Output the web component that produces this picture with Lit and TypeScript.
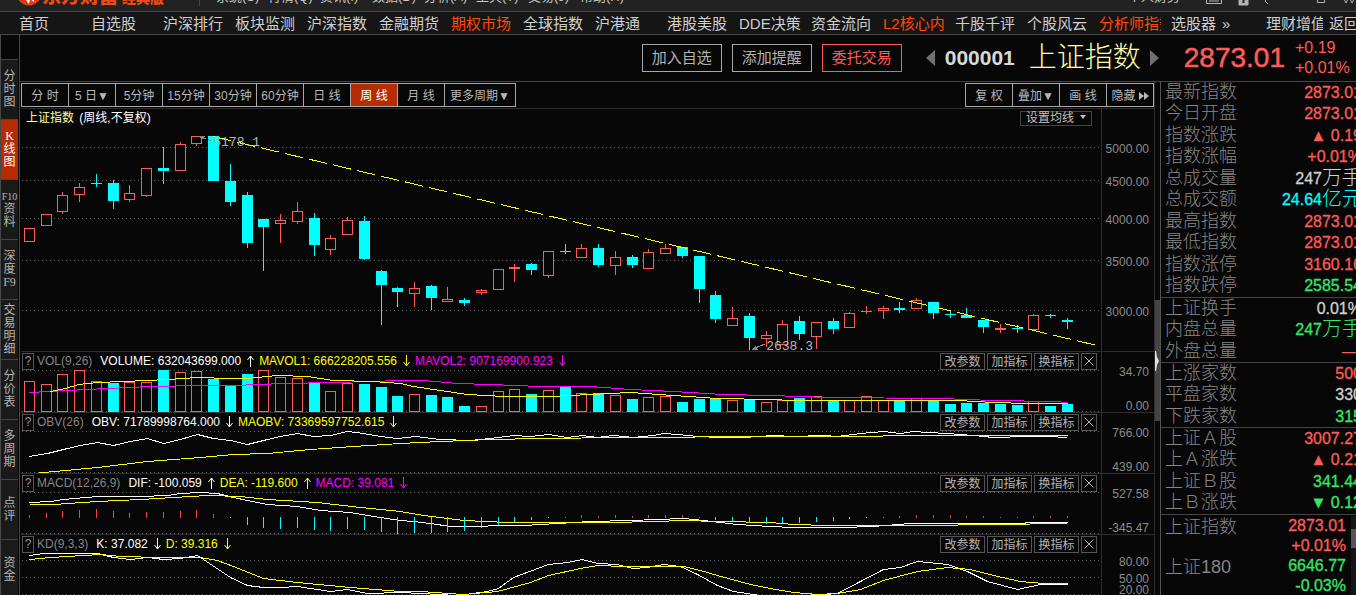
import { LitElement, html, svg, css } from "lit";
import { customElement, property } from "lit/decorators.js";
import { classMap } from "lit/directives/class-map.js";

type Tone = "up" | "down" | "plain" | "amount";
// direction, body top, body bottom, wick top, wick bottom
type Candle = [string, number, number, number, number];

const FIRST_X = 24;
const STEP = 16.74;
const slotX = (i: number) => Math.round(FIRST_X + STEP * i);

const CANDLES: Candle[] = [
  ["r", 228, 242, 228, 242], ["r", 214, 226, 214, 226], ["r", 195, 212, 192, 214],
  ["r", 187, 195, 183, 202], ["c", 183, 184, 174, 187], ["c", 183, 201, 180, 209],
  ["r", 193, 200, 185, 202], ["r", 168, 196, 168, 197], ["c", 168, 171, 147, 184],
  ["r", 144, 171, 142, 171], ["r", 136, 144, 136, 146], ["c", 136, 181, 136, 181],
  ["c", 181, 202, 164, 206], ["c", 195, 243, 192, 248], ["c", 219, 227, 219, 271],
  ["r", 220, 224, 214, 243], ["r", 211, 222, 202, 224], ["c", 218, 245, 213, 256],
  ["r", 238, 250, 235, 255], ["r", 220, 235, 217, 235], ["c", 221, 259, 216, 260],
  ["c", 271, 285, 270, 325], ["c", 288, 292, 287, 307], ["r", 288, 294, 282, 307],
  ["c", 286, 298, 285, 310], ["r", 299, 302, 287, 302], ["c", 300, 303, 298, 306],
  ["r", 290, 293, 289, 295], ["r", 269, 290, 269, 290], ["r", 267, 269, 264, 282],
  ["c", 264, 270, 263, 275], ["r", 251, 276, 251, 278], ["c", 251, 252, 244, 254],
  ["r", 248, 258, 244, 258], ["c", 248, 265, 244, 267], ["r", 257, 266, 251, 275],
  ["c", 257, 265, 255, 268], ["r", 252, 269, 249, 269], ["r", 248, 254, 244, 254],
  ["c", 247, 256, 247, 258], ["c", 256, 289, 256, 303], ["c", 295, 319, 291, 323],
  ["r", 318, 326, 307, 326], ["c", 316, 338, 313, 350], ["r", 335, 339, 331, 347],
  ["r", 324, 345, 320, 345], ["c", 321, 334, 316, 340], ["r", 322, 337, 322, 349],
  ["c", 321, 329, 318, 334], ["r", 313, 328, 312, 328], ["r", 311, 312, 306, 314],
  ["r", 308, 311, 306, 319], ["c", 308, 310, 302, 313], ["r", 300, 309, 298, 309],
  ["c", 302, 313, 302, 319], ["c", 314, 315, 311, 318], ["c", 315, 318, 308, 318],
  ["c", 320, 327, 320, 333], ["r", 328, 330, 324, 333], ["c", 328, 329, 325, 333],
  ["r", 315, 330, 314, 330], ["c", 315, 316, 314, 318], ["c", 320, 322, 318, 329],
];

const VOLUMES =
  "r381 r384 r374 r370 r381 c383 r382 r382 c370 r372 r371 c379 c386 c374 r370 r377 r378 c383 r391 r383 c384 c387 c396 r394 c395 c397 c406 r406 r391 r389 c394 r390 c387 r393 c393 r395 c399 r397 r396 c402 c399 c398 r400 c400 r402 r400 c398 r396 c401 r400 r396 r400 c401 r398 c400 c404 c403 c403 c404 c405 r401 c406 c404"
    .split(" ")
    .map((v) => ({ dir: v[0], top: Number(v.slice(1)) }));

// positive: top of a rising bar; negative: bottom of a falling bar
const MACD_BARS = [
  515, 513, 511, 510, 509, 511, 513, 512, 512, 511, 510, 514, -518, -525, -528, -529, -528, -530, -531, -529, -530,
  -532, -534, -533, -533, -532, -531, -528, -525, -522, -520, -518, 517, 515, 516, 515, 516, 515, 515, 515, 517, -520,
  -521, -523, -524, -523, -523, -522, -521, -519, -518, 517, 516, 515, 515, 515, 516, 516, 517, 517, 516, 516, 516,
];

const LINES = {
  vol1: "50,391 65,388 78,384 97,382 147,380 167,379 197,377 230,378 247,378 277,375 307,376 333,380 373,381 400,383 413,386 440,390 467,394 503,396 550,396 590,394 630,392 673,395 717,398 770,399 793,400 823,400 957,400 993,402 1027,403 1067,403",
  vol2: "29,392 67,390 107,388 150,386 200,385 233,385 283,383 333,382 370,381 400,380 423,380 457,383 490,384 540,386 590,386 630,389 673,391 723,394 770,395 827,397 940,398 993,400 1053,401 1067,402",
  obv: "29,456 47,453 63,449 80,445 97,442 113,445 130,441 147,438 163,443 180,439 197,434 213,438 230,440 247,444 263,440 280,436 297,433 313,436 330,435 347,431 363,433 380,436 397,438 415,436 440,439 470,440 490,438 513,435 530,436 548,434 567,437 582,435 597,437 613,435 633,437 653,435 663,433 677,434 697,436 720,437 743,437 773,435 793,436 823,435 837,436 860,433 883,431 900,433 913,431 927,432 947,433 973,435 993,437 1027,436 1047,436 1067,437",
  maobv: "33,473 97,467 147,461 200,457 233,454 267,453 310,449 353,446 400,443 440,441 490,439 540,438 623,437 770,436 873,436 893,435 1067,435",
  dif: "29,502 50,501 63,499 97,496 140,496 167,495 180,493 200,492 217,493 233,497 247,500 267,504 297,506 320,510 350,512 373,516 400,520 413,521 430,523 450,526 483,526 493,525 523,525 557,523 590,521 630,520 683,518 703,520 737,524 770,526 793,527 840,527 873,526 910,523 1023,523 1027,522 1067,522",
  dea: "29,504 53,504 97,501 140,499 173,497 207,495 240,496 267,499 317,502 360,507 400,511 423,515 463,520 507,522 573,522 607,522 657,521 680,520 720,521 770,522 793,524 827,525 923,525 993,524 1067,523",
  k: "29,555 43,553 97,553 113,557 130,559 147,557 163,559 180,558 197,555 230,577 247,585 263,587 280,587 297,586 330,591 347,589 367,593 400,592 420,593 457,595 487,591 498,588 513,577 548,564 567,562 582,559 597,563 617,564 632,568 647,567 663,564 680,566 697,574 717,585 733,591 760,595 810,595 837,593 860,581 883,569 900,567 917,561 947,564 967,571 987,581 1017,589 1040,584 1067,584",
  d: "29,559 50,557 100,554 120,556 160,557 200,557 217,560 233,566 263,578 297,582 350,587 400,591 420,591 463,594 497,591 530,582 548,575 580,568 597,565 623,566 653,566 683,566 700,570 717,575 750,584 770,588 793,592 817,594 837,593 860,589 883,580 917,571 947,567 970,569 993,575 1020,581 1043,583 1067,583",
};

const PRICE_AXIS = [
  { y: 147, label: "5000.00" },
  { y: 180, label: "4500.00" },
  { y: 218, label: "4000.00" },
  { y: 260, label: "3500.00" },
  { y: 310, label: "3000.00" },
];

const UP = "#ff5b57";
const CYAN = "#00ffff";

const grid = (ys: number[]) =>
  ys.map((y) => svg`<line x1="22" x2="1101" y1=${y + 0.5} y2=${y + 0.5} stroke="#606060" stroke-dasharray="1 3"/>`);
const curve = (points: string, color: string) =>
  svg`<polyline points=${points} fill="none" stroke=${color} vector-effect="non-scaling-stroke" transform="translate(0.5 0.5)"/>`;
const box = (dir: string, x: number, top: number, bottom: number) =>
  dir === "c" || bottom - top < 3
    ? svg`<rect x=${x} y=${top} width="11" height=${bottom - top} fill=${dir === "c" ? CYAN : UP}/>`
    : svg`<rect x=${x + 0.5} y=${top + 0.5} width="10" height=${bottom - top - 1} fill="#070707" stroke=${UP}/>`;

const arrow = (dir: string, color: string) => html`<svg class="trend" viewBox="0 0 7 12" aria-hidden="true">
  ${dir === "up"
    ? svg`<path d="M3.5 12V1M.5 5l3-4 3 4" fill="none" stroke=${color}/>`
    : svg`<path d="M3.5 0v11M.5 7l3 4 3-4" fill="none" stroke=${color}/>`}
</svg>`;

@customElement("indicator-panel")
class IndicatorPanel extends LitElement {
  @property() name = "";
  @property({ attribute: false }) readings: { text: string; dir: string; color: string }[] = [];
  @property({ attribute: false }) plot: unknown = null;
  @property({ attribute: false }) axis: { y: number; label: string }[] = [];
  @property({ type: Number }) top = 0;

  static styles = css`
    :host { display: grid; grid-template-columns: 1fr 53px; border-top: 1px solid #2e2e2e; height: 60px; }
    .body { min-width: 0; }
    .head { display: flex; align-items: center; height: 18px; gap: 8px; padding: 0 4px 0 1px; white-space: nowrap; line-height: 16px; }
    button { font: inherit; color: #b4b4b4; background: #070707; border: 1px solid #555; padding: 0; height: 17px; line-height: 16px; cursor: pointer; }
    .help { width: 12px; margin-right: -5px; color: #9a9a9a; line-height: 15px; }
    .name { color: #868686; }
    .reading { display: flex; align-items: center; gap: 6px; }
    .reading + .reading { margin-left: -3px; }
    .white { color: #fff; }
    .yellow { color: #ff0; }
    .magenta { color: #f0f; }
    .trend { width: 7px; height: 12px; display: block; }
    .actions { display: flex; gap: 2px; margin-left: auto; }
    .actions button { width: 45px; }
    .actions .close { width: 16px; display: grid; place-items: center; }
    .close svg { width: 10px; height: 10px; }
    .plot { display: block; width: 100%; height: 42px; }
    .axis { display: block; width: 52px; height: 60px; border-left: 1px solid #2e2e2e; font-size: 12px; }
  `;

  render() {
    const hex: Record<string, string> = { white: "#fff", yellow: "#ff0", magenta: "#f0f" };
    return html`
      <div class="body">
        <div class="head">
          <button class="help" aria-label="${this.name} 说明">?</button>
          <span class="name">${this.name}</span>
          ${this.readings.map(
            (r) => html`<span class="reading ${r.color}">${r.text}${arrow(r.dir, hex[r.color])}</span>`
          )}
          <span class="actions">
            <button>改参数</button><button>加指标</button><button>换指标</button>
            <button class="close" aria-label="关闭">
              <svg viewBox="0 0 10 10"><path d="M.5.5l9 9M9.5.5l-9 9" stroke="#b4b4b4" fill="none"/></svg>
            </button>
          </span>
        </div>
        <svg class="plot" viewBox="21 ${this.top + 18} 1080 42" preserveAspectRatio="none" shape-rendering="crispEdges">
          ${this.plot}
        </svg>
      </div>
      <svg class="axis" viewBox="0 ${this.top} 52 60">
        ${this.axis.map((a) => svg`<text x="47" y=${a.y} text-anchor="end" fill="#8c8c8c">${a.label}</text>`)}
      </svg>
    `;
  }
}

const QUOTES: [string, string, string, Tone][][] = [
  [
    ["最新指数", "2873.01", "", "up"],
    ["今日开盘", "2873.01", "", "up"],
    ["指数涨跌", "▲ 0.19", "", "up"],
    ["指数涨幅", "+0.01%", "", "up"],
    ["总成交量", "247", "万手", "plain"],
    ["总成交额", "24.64", "亿元", "amount"],
    ["最高指数", "2873.01", "", "up"],
    ["最低指数", "2873.01", "", "up"],
    ["指数涨停", "3160.16", "", "up"],
    ["指数跌停", "2585.54", "", "down"],
  ],
  [
    ["上证换手", "0.01%", "", "plain"],
    ["内盘总量", "247", "万手", "down"],
    ["外盘总量", "", "—", "up"],
  ],
  [
    ["上涨家数", "500", "", "up"],
    ["平盘家数", "330", "", "plain"],
    ["下跌家数", "315", "", "down"],
  ],
  [
    ["上证Ａ股", "3007.27", "", "up"],
    ["上Ａ涨跌", "▲ 0.21", "", "up"],
    ["上证Ｂ股", "341.44", "", "down"],
    ["上Ｂ涨跌", "▼ 0.12", "", "down"],
  ],
];

const MENU: [string, boolean][] = [
  ["首页", false], ["自选股", false], ["沪深排行", false], ["板块监测", false], ["沪深指数", false],
  ["金融期货", false], ["期权市场", true], ["全球指数", false], ["沪港通", false], ["港股美股", false],
  ["DDE决策", false], ["资金流向", false], ["L2核心内参", true], ["千股千评", false], ["个股风云", false],
  ["分析师指数", true],
];

const SIDE = [
  ["分", "时", "图"], ["K", "线", "图"], ["F10", "资", "料"], ["深", "度", "F9"], ["交", "易", "明", "细"],
  ["分", "价", "表"], ["多", "周", "期"], ["点", "评"], ["资", "金"],
];

const PERIODS = ["分 时", "5 日▼", "5分钟", "15分钟", "30分钟", "60分钟", "日 线", "周 线", "月 线", "更多周期▼"];

@customElement("app-root")
class AppRoot extends LitElement {
  static styles = css`
    :host {
      display: flex; flex-direction: column; height: 100vh; overflow: hidden; background: #070707; color: #c8c8c8;
      font: 12px/16px "Liberation Sans", "Noto Sans CJK SC", sans-serif;
    }
    button { font: inherit; padding: 0; cursor: pointer; }
    a { color: inherit; text-decoration: none; }

    .titlebar { flex: none; height: 11px; overflow: hidden; display: flex; align-items: flex-end; background: #222; border-bottom: 1px solid #484848; white-space: nowrap; }
    .brand { flex: none; width: 200px; height: 26px; padding-left: 16px; box-sizing: border-box; display: flex; align-items: flex-start; color: #f04a12; font-weight: 900; border-right: 1px solid #444; margin-bottom: 5px; }
    .logo { width: 26px; height: 26px; }
    .brand b { font-size: 19px; line-height: 34px; }
    .brand small { font-size: 14px; line-height: 36px; margin-left: 4px; }
    .system { display: flex; padding-left: 16px; margin-bottom: 5px; }
    .system a { width: 52px; font-size: 13px; line-height: 18px; }
    .tray { margin: 0 0 5px auto; display: flex; align-items: flex-end; font-size: 13px; line-height: 18px; }
    .tray svg { width: 156px; height: 16px; margin-left: 20px; }

    .menu { flex: none; display: flex; height: 22px; padding-left: 19px; background: #151515; border-bottom: 1px solid #484848; font-size: 15px; line-height: 24px; white-space: nowrap; color: #cfcfcf; overflow: hidden; }
    .menu a { flex: none; width: 62px; margin-right: 10px; overflow: hidden; }
    .menu a.hot { color: #ff4a0a; }
    .menu a.short { width: 51px; margin-right: 0; }
    .menu a.more { width: 44px; margin-right: 0; }
    .menu a.wealth { width: 57px; margin-right: 6px; }

    .shell { flex: 1; min-height: 0; display: flex; }
    .side { flex: none; width: 18px; border-left: 1px solid #484848; border-right: 1px solid #484848; padding-top: 24px; }
    .side a { height: 59px; border-top: 1px solid #444; display: flex; flex-direction: column; align-items: center; justify-content: center; line-height: 13px; font-size: 12px; background: #1a1a1a; color: #b4b4b4; font-family: "Liberation Serif", "Noto Sans CJK SC", serif; margin-right: 1px; }
    .side a.on { background: #b62c00; color: #fff; }
    .side .wide { font-size: 10px; }

    .work { flex: 1; min-width: 0; display: flex; flex-direction: column; }
    .header { flex: none; height: 46px; display: flex; align-items: center; justify-content: flex-end; border-bottom: 1px solid #444; }
    .act { width: 80px; height: 28px; margin-right: 10px; background: none; border: 1px solid #a8a8a8; color: #b4b4b4; font-size: 15px; line-height: 24px; }
    .act.trade { border-color: #ff5b57; color: #ff5b57; }
    .step { width: 9px; height: 16px; border: 0; background: none; display: grid; }
    .step svg { width: 9px; height: 16px; }
    .step.prev { margin-left: 14px; }
    .code { font-size: 21px; font-weight: bold; color: #d8d8d8; margin-left: 10px; }
    .stock { width: 112px; font-size: 28px; font-weight: 300; line-height: 40px; color: #ffffa8; margin: 0 9px 0 14px; }
    .last { font-size: 28px; color: #ff5b57; margin-left: 25px; -webkit-text-stroke: 0.5px #ff5b57; }
    .delta { width: 61px; margin-left: 10px; font-size: 16px; line-height: 20px; color: #ff5b57; }
    .delta span { display: block; }

    .content { flex: 1; min-height: 0; display: flex; }
    .charts { flex: 1; min-width: 0; padding-left: 1px; }
    .toolbar { display: flex; justify-content: space-between; height: 24px; padding: 1px 0; border-bottom: 1px solid #2e2e2e; }
    .tabs { display: flex; border: 1px solid #a8a8a8; }
    .tabs button { width: 47px; border: 0; border-right: 1px solid #a8a8a8; background: none; color: #b8b8b8; white-space: nowrap; padding-top: 1px; }
    .tabs button:last-child { border-right: 0; width: 46px; }
    .tabs.periods button:last-child { width: 70px; }
    .tabs button.on { background: #b62c00; color: #fff; }
    .tabs svg { width: 10px; height: 8px; margin-left: 3px; }

    .price { display: grid; grid-template-columns: 1fr 53px; }
    .caption { display: flex; justify-content: space-between; align-items: center; height: 18px; line-height: 18px; padding: 0 9px 0 5px; color: #fff; }
    .caption em { font-style: normal; color: #ffffa8; margin-right: 2px; }
    .avg { width: 72px; height: 15px; border: 1px solid #444; background: none; color: #c0c0c0; line-height: 13px; white-space: nowrap; }
    .avg svg { width: 6px; height: 4px; margin: 0 0 3px 6px; }
    .stage { position: relative; overflow: hidden; }
    .stage svg { display: block; width: 100%; height: 224px; }
    .mark { position: absolute; font: 13px/14px "Liberation Mono", monospace; color: #b8b8b8; }
    .high { left: 17.8%; top: 9px; }
    .low { left: 69%; top: 213px; }
    .scale { display: block; width: 52px; height: 242px; border-left: 1px solid #2e2e2e; }

    .divider { flex: none; width: 5px; border-left: 1px solid #2e2e2e; padding-top: 218px; }
    .divider button { display: grid; place-items: center start; width: 5px; height: 121px; background: #444; border: 0; }
    .divider svg { width: 4px; height: 20px; }

    .quotes { flex: none; width: 195px; border-left: 1px solid #555; overflow: hidden; }
    .group { border-bottom: 1px solid #444; width: 201px; margin: 0; }
    .row { display: flex; justify-content: space-between; height: 21px; line-height: 21px; padding-left: 4px; white-space: nowrap; }
    .row:nth-child(even) { height: 22px; }
    dt { font-size: 18px; font-weight: 300; color: #868686; }
    dd { margin: 0; font-size: 16px; -webkit-text-stroke: 0.3px currentColor; display: flex; }
    dd i { font-style: normal; font-size: 20px; font-weight: 300; -webkit-text-stroke: 0; }
    .up { color: #ff5b57; }
    .down { color: #33e866; }
    .plain { color: #d0d0d0; }
    .amount { color: #00ffff; }
    .watch { display: flex; padding-top: 1px; }
    .watch dl { flex: 1; margin: 0; padding: 0 5px 0 4px; }
    .watch .item { display: flex; justify-content: space-between; line-height: 20px; }
    .watch dt { line-height: 22px; }
    .watch dd { flex-direction: column; align-items: flex-end; }
    .scroll { width: 5px; height: 82px; background: #151515; padding-top: 13px; }
    .thumb { height: 19px; background: #555; }
  `;

  private renderPrice() {
    return svg`
      ${grid(PRICE_AXIS.map((a) => a.y))}
      ${CANDLES.map(([dir, top, bottom, high, low], i) => {
        const x = slotX(i);
        return svg`<rect x=${x + 5} y=${high} width="1" height=${low - high} fill=${dir === "c" ? CYAN : UP}/>${box(dir, x, top, bottom)}`;
      })}
      <line x1="213" y1="136.5" x2="1095" y2="345" stroke="#ff0" stroke-dasharray="18.5 6.17"/>
      <path d="M198 136h7l-3 4z" fill="#888"/><path d="M203 138l9 3" stroke="#888" stroke-dasharray="3 2"/>
      <path d="M751 350l5-4 2 4z" fill="#888"/><path d="M755 348l10-4" stroke="#888"/>`;
  }

  private renderVolume() {
    return svg`${grid([370, 411])}
      ${VOLUMES.map((v, i) => box(v.dir, slotX(i), v.top, 412))}
      ${curve(LINES.vol2, "#f0f")}${curve(LINES.vol1, "#ff0")}`;
  }

  private renderMacd() {
    return svg`${grid([492, 533])}
      ${curve(LINES.dif, "#fff")}${curve(LINES.dea, "#ff0")}
      ${MACD_BARS.map((v, i) =>
        v > 0
          ? svg`<rect x=${slotX(i) + 5} y=${v} width="1" height=${518 - v} fill="#ff3c3c"/>`
          : svg`<rect x=${slotX(i) + 5} y="517" width="1" height=${-v - 517} fill=${CYAN}/>`
      )}`;
  }

  render() {
    return html`
      <header class="titlebar">
        <div class="brand">
          <svg class="logo" viewBox="0 0 26 26"><circle cx="13" cy="13" r="12.5" fill="#e8380d"/><path d="M8 8l2 12 3 4 1-5 4 3 1-14z" fill="#fff"/><path d="M12 12l2 6 3-7z" fill="#e8380d"/></svg>
          <b>东方财富</b><small>经典版</small>
        </div>
        <nav class="system">
          ${["系统(S)", "行情(Q)", "资讯(I)", "数据(D)", "分析(A)", "工具(T)", "交易(J)", "帮助(H)"].map((t) => html`<a href="#">${t}</a>`)}
        </nav>
        <div class="tray">
          <span>个人财务</span>
          <svg viewBox="0 0 156 16" fill="none" stroke="#b4b4b4"><path d="M6.5 6v7.500h15V6M9 11h10" /><path d="M39 6v9h9V6z" fill="#b4b4b4"/><path d="M43.5 10v3" stroke="#222" stroke-width="2"/><path d="M68 8l-3 3 3 3M117.5 6v6.500h7V6M143 7l3 6 3-6 3 6 3-6"/></svg>
        </div>
      </header>

      <nav class="menu">
        ${MENU.map(([t, hot]) => html`<a href="#" class=${classMap({ hot })}>${t}</a>`)}
        <a href="#" class="short">选股器</a><a href="#" class="more">»</a><a href="#" class="wealth">理财增值</a><a href="#">返回</a>
      </nav>

      <div class="shell">
        <nav class="side">
          ${SIDE.map(
            (cs, i) =>
              html`<a href="#" class=${classMap({ on: i === 1 })}>${cs.map((c) => html`<span class=${classMap({ wide: c.length > 2 })}>${c}</span>`)}</a>`
          )}
        </nav>
        <div class="work">
          <div class="header">
            <button class="act">加入自选</button><button class="act">添加提醒</button><button class="act trade">委托交易</button>
            <button class="step prev" aria-label="上一个"><svg viewBox="0 0 9 16"><path d="M9 0v16L0 8z" fill="#707070"/></svg></button>
            <span class="code">000001</span><span class="stock">上证指数</span>
            <button class="step" aria-label="下一个"><svg viewBox="0 0 9 16"><path d="M0 0v16l9-8z" fill="#707070"/></svg></button>
            <span class="last">2873.01</span>
            <span class="delta"><span>+0.19</span><span>+0.01%</span></span>
          </div>
          <div class="content">
            <main class="charts">
              <div class="toolbar">
                <div class="tabs periods">${PERIODS.map((p, i) => html`<button class=${classMap({ on: i === 7 })}>${p}</button>`)}</div>
                <div class="tabs">
                  <button>复 权</button><button>叠加▼</button><button>画 线</button>
                  <button>隐藏<svg viewBox="0 0 10 8"><path d="M0 0l5 4-5 4zM5 0l5 4-5 4z" fill="#b8b8b8"/></svg></button>
                </div>
              </div>
              <section class="price">
                <div>
                  <div class="caption">
                    <span><em>上证指数</em> (周线,不复权)</span>
                    <button class="avg">设置均线<svg viewBox="0 0 6 4"><path d="M0 0h6L3 4z" fill="#c0c0c0"/></svg></button>
                  </div>
                  <div class="stage">
                    <svg viewBox="21 127 1080 224" preserveAspectRatio="none" shape-rendering="crispEdges">${this.renderPrice()}</svg>
                    <span class="mark high">5178.1</span><span class="mark low">2638.3</span>
                  </div>
                </div>
                <svg class="scale" viewBox="0 109 52 242">
                  ${PRICE_AXIS.map((a) => svg`<text x="47" y=${a.y + 6} text-anchor="end" fill="#8c8c8c">${a.label}</text>`)}
                </svg>
              </section>
              <indicator-panel name="VOL(9,26)" .top=${352} .plot=${this.renderVolume()}
                .readings=${[
                  { text: "VOLUME: 632043699.000", dir: "up", color: "white" },
                  { text: "MAVOL1: 666228205.556", dir: "down", color: "yellow" },
                  { text: "MAVOL2: 907169900.923", dir: "down", color: "magenta" },
                ]}
                .axis=${[{ y: 376, label: "34.70" }, { y: 410, label: "0.00" }]}></indicator-panel>
              <indicator-panel name="OBV(26)" .top=${413}
                .plot=${svg`${grid([431, 472])}${curve(LINES.obv, "#fff")}${curve(LINES.maobv, "#ff0")}`}
                .readings=${[
                  { text: "OBV: 71789998764.000", dir: "down", color: "white" },
                  { text: "MAOBV: 73369597752.615", dir: "down", color: "yellow" },
                ]}
                .axis=${[{ y: 437, label: "766.00" }, { y: 471, label: "439.00" }]}></indicator-panel>
              <indicator-panel name="MACD(12,26,9)" .top=${474} .plot=${this.renderMacd()}
                .readings=${[
                  { text: "DIF: -100.059", dir: "up", color: "white" },
                  { text: "DEA: -119.600", dir: "up", color: "yellow" },
                  { text: "MACD: 39.081", dir: "down", color: "magenta" },
                ]}
                .axis=${[{ y: 498, label: "527.58" }, { y: 532, label: "-345.47" }]}></indicator-panel>
              <indicator-panel name="KD(9,3,3)" .top=${535}
                .plot=${svg`${grid([560, 577, 594])}${curve(LINES.k, "#fff")}${curve(LINES.d, "#ff0")}`}
                .readings=${[
                  { text: "K: 37.082", dir: "down", color: "white" },
                  { text: "D: 39.316", dir: "down", color: "yellow" },
                ]}
                .axis=${[{ y: 566, label: "80.00" }, { y: 583, label: "50.00" }, { y: 594, label: "20.00" }]}></indicator-panel>
            </main>
            <div class="divider">
              <button aria-label="展开行情栏"><svg viewBox="0 0 4 20"><path d="M0 0l1 0 1 6 2 4-2 4-1 6H0z" fill="#e0e0e0"/></svg></button>
            </div>
            <aside class="quotes">
              ${QUOTES.map(
                (g) => html`<dl class="group">
                  ${g.map(([label, value, unit, tone]) => html`<div class="row"><dt>${label}</dt><dd class=${tone}>${value}${unit ? html`<i>${unit}</i>` : ""}</dd></div>`)}
                </dl>`
              )}
              <div class="watch">
                <dl>
                  <div class="item"><dt>上证指数</dt><dd class="up"><span>2873.01</span><span>+0.01%</span></dd></div>
                  <div class="item"><dt>上证180</dt><dd class="down"><span>6646.77</span><span>-0.03%</span></dd></div>
                </dl>
                <div class="scroll"><div class="thumb"></div></div>
              </div>
            </aside>
          </div>
        </div>
      </div>
    `;
  }
}
